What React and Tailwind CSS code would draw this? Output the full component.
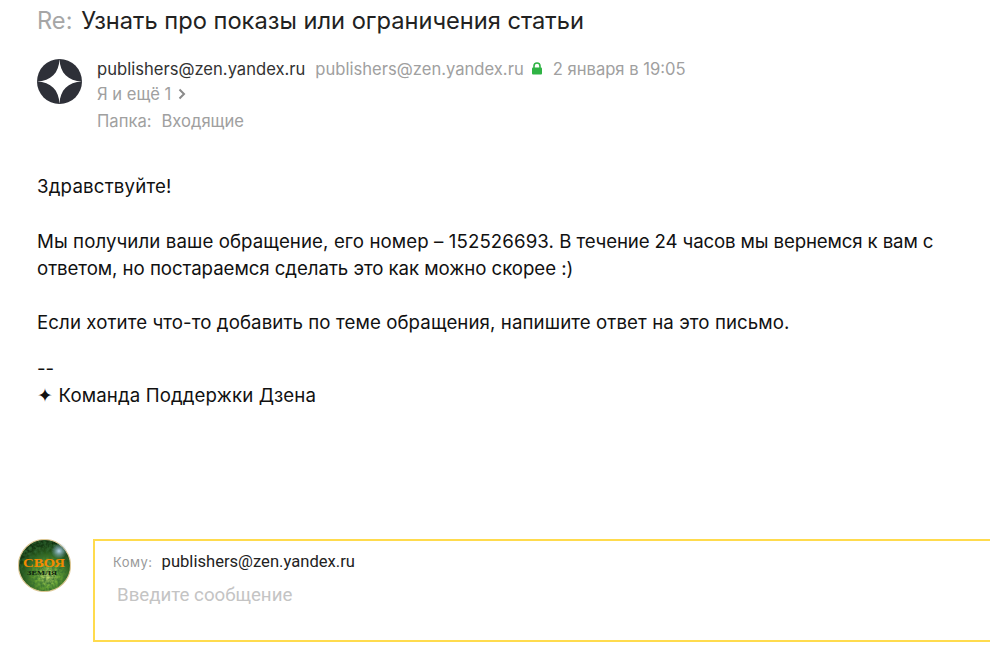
export default function App() {
  const ui = { fontFamily: '"Inter", "Noto Sans", sans-serif' };
  return (
    <div className="w-[990px] h-[652px] overflow-hidden bg-white text-[#111]" style={ui}>
      <div className="pl-[37px] pt-[6px] h-[46px] text-[23.65px] leading-[30px] whitespace-nowrap">
        <span className="text-[#a6a6a6]">Re:</span> <span className="text-[#222] ml-[2px]">Узнать про показы или ограничения статьи</span>
      </div>
      <div className="flex pl-[37px] pt-[5px] h-[90px]">
        <svg width="45" height="45" viewBox="0 0 45 45" className="mt-[8px] shrink-0">
          <circle cx="22.5" cy="22.5" r="22.5" fill="#2e3038" />
          <path d="M22.5 0 C23 14 31 22 45 22.5 C31 23 23 31 22.5 45 C22 31 14 23 0 22.5 C14 22 22 14 22.5 0Z" fill="#fff" />
        </svg>
        <div className="ml-[15px] pt-[6px] text-[16.6px] leading-[28px] whitespace-nowrap">
          <div className="flex items-center h-[23px]">
            <span className="text-[#333]">publishers@zen.yandex.ru</span>
            <span className="ml-[10px] text-[#a0a0a0]">publishers@zen.yandex.ru</span>
            <svg width="12" height="13" viewBox="0 0 12 13" className="ml-[7px]">
              <path d="M3 6V4a3 3 0 0 1 6 0v2" fill="none" stroke="#2fb344" strokeWidth="1.6" />
              <rect x="1" y="5.5" width="10" height="7" rx="1" fill="#2fb344" />
            </svg>
            <span className="ml-[10px] text-[#a0a0a0]">2 января в 19:05</span>
          </div>
          <div className="flex items-center h-[28px] text-[#a0a0a0]">
            <span>Я и ещё 1</span>
            <svg width="8" height="12" viewBox="0 0 8 12" className="ml-[7px]">
              <path d="M1.5 1.5 6 6l-4.5 4.5" fill="none" stroke="#8a8a8a" strokeWidth="2" />
            </svg>
          </div>
          <div className="h-[27px] leading-[26px] text-[#a0a0a0]">
            <span>Папка:</span><span className="ml-[10px]">Входящие</span>
          </div>
        </div>
      </div>
      <div className="pl-[37px] text-[18.65px] leading-[27.3px] w-[960px] mt-[37px] text-[#111]">
        <p className="tracking-[0.2px]">Здравствуйте!</p>
        <p className="mt-[27.3px] whitespace-nowrap">
          <span className="tracking-[0.1px]">Мы получили ваше обращение, его номер – 152526693.</span>{" "}
          <span className="tracking-[-0.13px]">В течение 24 часов мы вернемся к вам с</span>
        </p>
        <p className="tracking-[-0.05px]">ответом, но постараемся сделать это как можно скорее :)</p>
        <p className="mt-[27.3px] tracking-[0.1px]">Если хотите что-то добавить по теме обращения, напишите ответ на это письмо.</p>
        <p className="mt-[18px]">--</p>
        <p className="tracking-[0.12px]">✦ Команда Поддержки Дзена</p>
      </div>
      <div className="flex mt-[130px] pl-[18px]">
        <svg width="53" height="53" viewBox="0 0 53 53" className="shrink-0">
          <defs>
            <radialGradient id="g" cx="56%" cy="70%" r="62%">
              <stop offset="0%" stopColor="#c3dc72" />
              <stop offset="35%" stopColor="#6aa636" />
              <stop offset="72%" stopColor="#2a5c1c" />
              <stop offset="100%" stopColor="#10300f" />
            </radialGradient>
            <radialGradient id="s" cx="50%" cy="50%" r="50%">
              <stop offset="0%" stopColor="#b4d4ea" />
              <stop offset="100%" stopColor="#7fb0cf" stopOpacity="0" />
            </radialGradient>
            <filter id="n" x="0" y="0" width="100%" height="100%">
              <feTurbulence type="fractalNoise" baseFrequency="0.35" numOctaves="2" seed="4" />
              <feColorMatrix values="0 0 0 0 0.03  0 0 0 0 0.14  0 0 0 0 0.03  1.8 0 0 0 -0.55" />
            </filter>
            <clipPath id="c"><circle cx="26.5" cy="26.5" r="25.5" /></clipPath>
          </defs>
          <circle cx="26.5" cy="26.5" r="26" fill="url(#g)" stroke="#dcc795" strokeWidth="1.2" />
          <rect width="53" height="53" filter="url(#n)" clipPath="url(#c)" />
          <circle cx="41" cy="12" r="8" fill="url(#s)" />
          <text x="26" y="28" textAnchor="middle" fontFamily="Liberation Serif" fontWeight="700" fontSize="13" textLength="42" lengthAdjust="spacingAndGlyphs" fill="#f58a00">СВОЯ</text>
          <text x="24" y="36" textAnchor="middle" fontFamily="Liberation Serif" fontWeight="700" fontSize="6" textLength="30" lengthAdjust="spacingAndGlyphs" fill="#0d200d">ЗЕМЛЯ</text>
        </svg>
        <div className="ml-[22px] flex-1 h-[103px] border-2 border-r-0 border-[#ffdb4d] pl-[18px] pt-[11px]">
          <div className="flex items-center h-[20px]">
            <span className="text-[13px] text-[#999] tracking-[0.5px]">Кому:</span>
            <span className="ml-[9px] text-[16.6px] text-[#222]" style={{ fontFamily: '"Roboto", sans-serif' }}>publishers@zen.yandex.ru</span>
          </div>
          <div className="ml-[4px] mt-[9px] text-[18.7px] text-[#c4c4c4]" style={{ fontFamily: '"Roboto", sans-serif' }}>Введите сообщение</div>
        </div>
      </div>
    </div>
  );
}
